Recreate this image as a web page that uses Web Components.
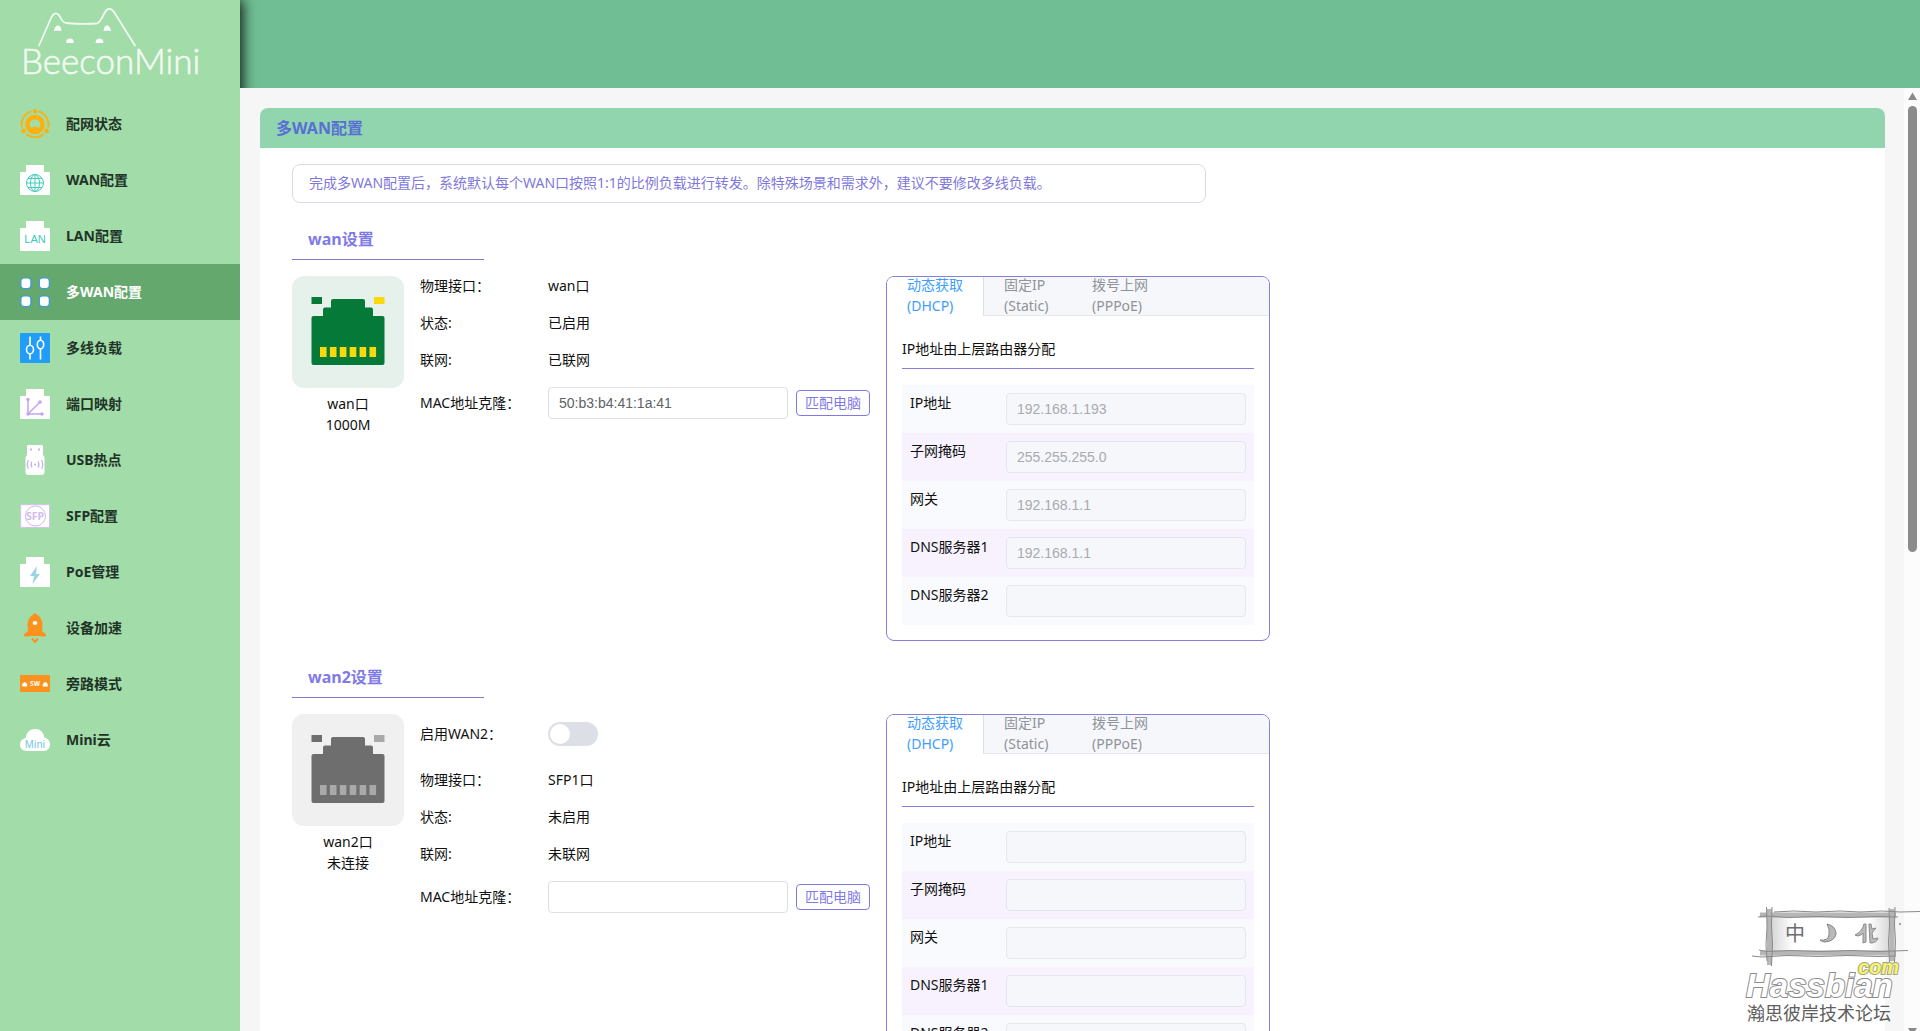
<!DOCTYPE html>
<html lang="zh-CN">
<head>
<meta charset="utf-8">
<title>BeeconMini</title>
<style>
  html, body { margin: 0; height: 100%; }
  body {
    font: 14px/21px "Noto Sans", "Noto Sans CJK SC", sans-serif;
    color: #111;
    overflow: hidden;
    background: #f6f6f6;
  }
</style>
</head>
<body>
<bee-app>
  <bee-sidebar slot="side">
    <bee-nav-item icon="status">配网状态</bee-nav-item>
    <bee-nav-item icon="wan">WAN配置</bee-nav-item>
    <bee-nav-item icon="lan">LAN配置</bee-nav-item>
    <bee-nav-item icon="multi" active>多WAN配置</bee-nav-item>
    <bee-nav-item icon="load">多线负载</bee-nav-item>
    <bee-nav-item icon="map">端口映射</bee-nav-item>
    <bee-nav-item icon="usb">USB热点</bee-nav-item>
    <bee-nav-item icon="sfp">SFP配置</bee-nav-item>
    <bee-nav-item icon="poe">PoE管理</bee-nav-item>
    <bee-nav-item icon="rocket">设备加速</bee-nav-item>
    <bee-nav-item icon="sw">旁路模式</bee-nav-item>
    <bee-nav-item icon="cloud">Mini云</bee-nav-item>
  </bee-sidebar>
  <bee-card>
    <span slot="title">多WAN配置</span>
    <bee-notice>完成多WAN配置后，系统默认每个WAN口按照1:1的比例负载进行转发。除特殊场景和需求外，建议不要修改多线负载。</bee-notice>
    <wan-section heading="wan设置">
      <port-tile slot="port" online name="wan口" state="1000M"></port-tile>
      <info-row label="物理接口：">wan口</info-row>
      <info-row label="状态:">已启用</info-row>
      <info-row label="联网:">已联网</info-row>
      <mac-row value="50:b3:b4:41:1a:41"></mac-row>
      <ip-panel slot="panel" values="192.168.1.193,255.255.255.0,192.168.1.1,192.168.1.1,"></ip-panel>
    </wan-section>
    <wan-section heading="wan2设置">
      <port-tile slot="port" name="wan2口" state="未连接"></port-tile>
      <switch-row label="启用WAN2："></switch-row>
      <info-row label="物理接口：">SFP1口</info-row>
      <info-row label="状态:">未启用</info-row>
      <info-row label="联网:">未联网</info-row>
      <mac-row value=""></mac-row>
      <ip-panel slot="panel" values=",,,,"></ip-panel>
    </wan-section>
  </bee-card>
  <site-mark slot="mark"></site-mark>
</bee-app>

<script>
const define = (name, render) => customElements.define(name, class extends HTMLElement {
  connectedCallback() {
    if (this.shadowRoot) return;
    const t = document.createElement('template');
    t.innerHTML = render(this);
    this.attachShadow({ mode: 'open' }).append(t.content.cloneNode(true));
  }
});

/* 30 x 30 menu icons */
const port = '<path fill="#fff" d="M6 0h18v7h6v23H0V7h6z"/>';
const ICONS = {
  status: '<g fill="none" stroke="#fdb10f"><path stroke-width="1.800" d="M18.500 2.300A13.500 13.500 0 0 1 28 18.500M11.500 2.300A13.500 13.500 0 0 0 2 18.500M6.500 25.300a13.500 13.500 0 0 0 17 0"/><circle cx="15" cy="15.500" r="7.500" stroke-width="4.500"/></g><g fill="#fdb10f"><circle cx="15" cy="2.200" r="2.200"/><circle cx="3.500" cy="22" r="2.400"/><circle cx="26.500" cy="22" r="2.400"/><path d="M10 18.500h3q2-2 4 0h3v3H10z"/></g>',
  wan: port + '<g fill="none" stroke="#41cdbb" stroke-width="1"><circle cx="15" cy="18" r="8.500"/><ellipse cx="15" cy="18" rx="4.500" ry="8.500"/><path d="M15 9.500v17M6.500 18h17M8 13.500h14M8 22.500h14"/></g>',
  lan: port + '<text x="15" y="21.500" font-size="11" fill="#3ccbb9" text-anchor="middle" font-family="Liberation Sans">LAN</text>',
  multi: '<g fill="#fff" stroke="#379bdc" stroke-width="1.200"><rect x=".9" y="1" width="10" height="10.500" rx="3"/><rect x="19.300" y="1" width="10" height="10.500" rx="3"/><rect x=".9" y="19" width="10" height="10.500" rx="3"/><rect x="19.300" y="19" width="10" height="10.500" rx="3"/></g>',
  load: '<rect width="30" height="30" rx="1" fill="#219df8"/><g fill="none" stroke="#fff" stroke-width="1.600"><path d="M10 3.500v9M10 21v5.500M20.500 3.500v4M20.500 16v10.500"/><ellipse cx="10" cy="16.500" rx="3.500" ry="4.300"/><ellipse cx="20.500" cy="11.600" rx="3.200" ry="4.300"/></g>',
  map: port + '<g fill="none" stroke="#c5a3f0" stroke-width="1.500"><path d="M8 10.500V25h14M8 25 20 13"/></g><g fill="#c5a3f0"><circle cx="8" cy="10.500" r="1.700"/><circle cx="20" cy="13" r="1.800"/><circle cx="22" cy="25" r="1.700"/><circle cx="8" cy="25" r="1.700"/></g>',
  usb: '<path fill="#fff" d="M7 1q0-1 1-1h14q1 0 1 1v9q1.500 1 1.500 3v14q0 3-3 3h-13q-3 0-3-3V13q0-2 1.500-3z"/><g fill="#cbb2f0"><rect x="10" y="3.500" width="2" height="2"/><rect x="18" y="3.500" width="2" height="2"/><circle cx="15" cy="19.500" r="1.100"/></g><g fill="none" stroke="#cbb2f0" stroke-width="1.300"><path d="M11.800 16.500q-1.400 3 0 6M18.200 16.500q1.400 3 0 6M8.500 15q-2.400 4.500 0 9M21.500 15q2.400 4.500 0 9"/></g>',
  sfp: '<rect x=".7" y="3.700" width="28.800" height="22.800" fill="#fff" stroke="#d6c0f5"/><circle cx="15.500" cy="15" r="10" fill="none" stroke="#d2b9f4"/><text x="15" y="19" font-size="10.500" font-weight="700" fill="#d2b9f4" text-anchor="middle" font-family="Noto Sans">SFP</text>',
  poe: port + '<path fill="#9bd5e4" d="M16.500 9.500 10 19h4l-1.500 8 7.500-10h-4l.800-7.500z"/>',
  rocket: '<path fill="#fc911e" d="M15 0c5 3 7.500 7 7.500 12l-.5 6 4 3.500v1.500q-3 1-6 0h-10q-3 1-6 0v-1.500L8 18l-.5-6C7.500 7 10 3 15 0z"/><ellipse cx="15" cy="10" rx="2.400" ry="1.900" fill="#fff"/><path d="M12 25.500 15 29l3-3.500" fill="none" stroke="#fc911e" stroke-width="2"/>',
  sw: '<rect y="6" width="30" height="17" rx="1" fill="#fb921d"/><g fill="#fff"><path d="M2.200 17.500v-2.500l1-1q1.500-2 3 0l1 1v2.500zM22.800 17.500v-2.500l1-1q1.500-2 3 0l1 1v2.500z"/><text x="15" y="17" font-size="6.500" font-weight="700" text-anchor="middle" font-family="Noto Sans">SW</text></g>',
  cloud: '<path fill="#fff" d="M6 26q-6-1-6-6.500 0-5 5.500-6.500Q7 4 15 4t9.500 8.500Q30 14 30 19.500T24 26z"/><text x="15" y="22.500" font-size="10" fill="#72c6da" text-anchor="middle" font-family="Noto Sans">Mini</text>'
};

define('bee-app', () => `
<style>
  :host { display: grid; grid-template: 88px minmax(0, 1fr) / 240px minmax(0, 1fr); height: 100vh; overflow: hidden; position: relative; }
  header { grid-area: 1 / 2; background: #70be94; }
  aside { grid-area: 1 / 1 / 3 / 2; z-index: 1; display: flex; box-shadow: 3px 0 12px rgba(0,0,0,.85); }
  main { grid-area: 2 / 2; z-index: 2; display: flex; background: #f6f6f6; min-height: 0; }
  .view { flex: 1; min-width: 0; overflow-y: auto; scrollbar-width: none; padding: 20px 19px 20px 20px; }
  .bar { flex: none; width: 16px; background: #fcfcfc; margin-bottom: -8px; display: flex; flex-direction: column; align-items: center; }
  .bar i { width: 9px; height: 446px; border-radius: 5px; background: #8b8b8b; }
  .bar svg { width: 9px; height: 18px; flex: none; }
  .bar svg:last-child { margin-top: auto; }
</style>
<header></header>
<aside><slot name="side"></slot></aside>
<main>
  <div class="view"><slot></slot></div>
  <div class="bar" aria-hidden="true">
    <svg viewBox="0 0 9 18"><path d="M4.500 4.500 9 12H0z" fill="#8b8b8b"/></svg>
    <i></i>
    <svg viewBox="0 0 9 18"><path d="M0 7h9l-4.500 7z" fill="#8b8b8b"/></svg>
  </div>
</main>
<slot name="mark"></slot>`);

define('bee-sidebar', () => `
<style>
  :host { display: block; flex: 1; background: #a2dca9; }
  .logo { display: block; height: 96px; }
  svg { display: block; width: 240px; height: 96px; }
  nav { display: flex; flex-direction: column; }
</style>
<a class="logo" href="#home" aria-label="BeeconMini">
  <svg viewBox="0 0 240 96">
    <g fill="none" stroke="#effaf0" stroke-width="1.800" stroke-linecap="round" stroke-linejoin="round">
      <path d="M39 45.500 51.500 17q4.500-7 8.500-.5Q62 22 66 23q16 1.500 31 .5 3-1 7.500-10.500 4.500-8 9.500-1L135 45.500"/>
    </g>
    <g fill="#fff"><path d="M54 31q1-5.500 4-5.500T61.500 31q-3.500-1-7.500 0zM103.500 31q.5-5.500 3.500-5.500t4 5.500q-4-1-7.500 0zM66 42.500q.5-4 4-4t4 4q-1.500 1-4 .2-2.500.8-4-.2zM95.500 42.500q.5-4 4-4t4 4q-1.500 1-4 .2-2.500.8-4-.2z"/></g>
    <text x="21" y="74" font-family="Lato" font-weight="300" font-size="35" fill="#f2fbf2" stroke="#f2fbf2" stroke-width=".6">BeeconMini</text>
  </svg>
</a>
<nav><slot></slot></nav>`);

define('bee-nav-item', el => `
<style>
  :host { display: block; font-weight: 700; color: #1f3327; }
  :host([active]) { background: #64a86d; color: #fff; }
  a { display: flex; align-items: center; gap: 16px; height: 56px; padding: 0 20px; color: inherit; text-decoration: none; }
  svg { width: 30px; height: 30px; flex: none; font-weight: 400; }
  span { padding-bottom: 2px; }
</style>
<a href="#${el.getAttribute('icon')}"><svg viewBox="0 0 30 30" aria-hidden="true">${ICONS[el.getAttribute('icon')]}</svg><span><slot></slot></span></a>`);

define('bee-card', () => `
<style>
  :host { display: block; background: #fff; border-radius: 8px; overflow: hidden; }
  h1 { margin: 0; padding: 0 16px; font-size: 16px; line-height: 40px; color: #586fd6; background: #91d5af; }
  .body { display: flex; flex-direction: column; gap: 16px; padding: 16px 32px; }
</style>
<h1><slot name="title"></slot></h1>
<div class="body"><slot></slot></div>`);

define('bee-notice', () => `
<style>
  :host { display: block; box-sizing: border-box; width: 100%; max-width: 914px; padding: 7px 16px 9px; border: 1px solid #d9dbe9; border-radius: 8px; color: #8078dc; }
</style><slot></slot>`);

define('wan-section', el => `
<style>
  :host { display: flex; flex-direction: column; gap: 16px; }
  h2 { margin: 0; box-sizing: border-box; width: 192px; padding: 0 16px; font-size: 16px; line-height: 40px; color: #7f7be6; border-bottom: 1px solid #857bcc; }
  .cols { display: flex; gap: 16px; align-items: flex-start; }
  .rows { display: flex; flex-direction: column; gap: 16px; width: 450px; }
</style>
<h2>${el.getAttribute('heading')}</h2>
<div class="cols"><slot name="port"></slot><div class="rows"><slot></slot></div><slot name="panel"></slot></div>`);

define('port-tile', el => {
  const on = el.hasAttribute('online');
  const c = on ? '#057a38' : '#6e6e6e', p = on ? '#fbd80c' : '#a9a9a9';
  const pins = [0, 1, 2, 3, 4, 5].map(i => `<rect x="${28 + i * 9.900}" y="71" width="6.600" height="10"/>`).join('');
  return `
<style>
  :host { display: flex; flex-direction: column; gap: 5px; width: 112px; flex: none; text-align: center; }
  .tile { height: 112px; border-radius: 12px; background: ${on ? '#e6f1ec' : '#f0f0f0'}; }
  svg { display: block; width: 112px; height: 112px; }
  p { margin: 0; }
</style>
<div class="tile"><svg viewBox="0 0 112 112" aria-hidden="true">
  <g fill="${c}"><rect x="19.500" y="21" width="10.500" height="7"/><path d="M39 25q0-2 2-2h30q2 0 2 2v6.500h6q2 0 2 2V40h9.500q2 0 2 2v45q0 2-2 2h-69q-2 0-2-2V42q0-2 2-2H31v-6.500q0-2 2-2h6z"/></g>
  <g fill="${p}"><rect x="82" y="21" width="10.500" height="7"/>${pins}</g>
</svg></div>
<p>${el.getAttribute('name')}<br>${el.getAttribute('state')}</p>`;
});

define('info-row', el => `
<style>:host { display: flex; line-height: 19px; padding-bottom: 2px; } span { width: 128px; flex: none; }</style>
<span>${el.getAttribute('label')}</span><div><slot></slot></div>`);

define('switch-row', el => `
<style>
  :host { display: flex; align-items: center; height: 40px; }
  label { width: 128px; flex: none; padding-bottom: 2px; }
  input { appearance: none; margin: 0; width: 50px; height: 24px; padding: 2px; box-sizing: border-box; border-radius: 12px; background: #dcdfe6; display: flex; }
  input::before { content: ""; width: 20px; height: 20px; border-radius: 50%; background: #fff; }
  input:checked { background: #7f7be6; justify-content: flex-end; }
</style>
<label for="sw">${el.getAttribute('label')}</label><input id="sw" type="checkbox" role="switch">`);

define('mac-row', el => `
<style>
  :host { display: flex; align-items: center; }
  label { width: 128px; flex: none; padding-bottom: 2px; }
  input { box-sizing: border-box; width: 240px; height: 32px; padding: 0 10px; margin-right: 8px; border: 1px solid #dcdfe6; border-radius: 4px; font: 14px "Liberation Sans", sans-serif; color: #606266; background: #fff; }
  button { box-sizing: border-box; height: 26px; padding: 0 8px; border: 1px solid #7f7be6; border-radius: 4px; background: #fff; color: #7f7be6; font: inherit; line-height: 24px; white-space: nowrap; }
</style>
<label for="mac">MAC地址克隆：</label><input id="mac" type="text" value="${el.getAttribute('value')}"><button type="button">匹配电脑</button>`);

define('ip-field', el => `
<style>
  :host { display: flex; padding: 8px; background: #f9fafe; }
  :host([alt]) { background: #f7f2fe; }
  label { width: 96px; flex: none; line-height: 19px; }
  input { box-sizing: border-box; flex: 1; min-width: 0; height: 32px; padding: 0 10px; border: 1px solid #e4e7ed; border-radius: 4px; background: #f5f7fa; font: 14px "Liberation Sans", sans-serif; color: #a8abb2; }
</style>
<label for="f">${el.getAttribute('label')}</label><input id="f" type="text" disabled value="${el.getAttribute('value')}">`);

define('ip-panel', el => {
  const v = el.getAttribute('values').split(',');
  const fields = ['IP地址', '子网掩码', '网关', 'DNS服务器1', 'DNS服务器2']
    .map((l, i) => `<ip-field label="${l}" value="${v[i]}" ${i % 2 ? 'alt' : ''}></ip-field>`).join('');
  return `
<style>
  :host { display: block; box-sizing: border-box; width: 384px; flex: none; border: 1px solid #8580dc; border-radius: 8px; overflow: hidden; }
  .tabs { display: flex; height: 38px; background: #f5f7fa; border-bottom: 1px solid #e4e7ed; }
  button { display: flex; align-items: center; box-sizing: border-box; min-width: 88px; height: 39px; padding: 0 20px 3px; border: 0; background: none; font: inherit; color: #909399; text-align: left; overflow: hidden; }
  button[aria-selected=true] { background: #fff; color: #409eff; border-right: 1px solid #dcdfe6; }
  .pane { padding: 15px; }
  h3 { margin: 0 0 16px; font-size: 14px; font-weight: 400; line-height: 35px; padding-bottom: 2px; border-bottom: 1px solid #8580dc; }
</style>
<div class="tabs" role="tablist">
  <button role="tab" aria-selected="true"><span>动态获取<br>(DHCP)</span></button>
  <button role="tab" aria-selected="false"><span>固定IP<br>(Static)</span></button>
  <button role="tab" aria-selected="false"><span>拨号上网<br>(PPPoE)</span></button>
</div>
<div class="pane"><h3>IP地址由上层路由器分配</h3>${fields}</div>`;
});

define('site-mark', () => `
<style>
  :host { position: absolute; right: 0; bottom: 0; z-index: 3; pointer-events: none; }
  svg { display: block; width: 180px; height: 131px; }
</style>
<svg viewBox="0 0 180 131">
  <defs><linearGradient id="g" x1="0" x2="1"><stop offset="0" stop-color="#d8d8d8"/><stop offset=".18" stop-color="#fff"/><stop offset=".82" stop-color="#fff"/><stop offset="1" stop-color="#d8d8d8"/></linearGradient></defs>
  <rect x="32" y="17" width="118" height="36" fill="url(#g)"/>
  <g fill="none" stroke="#b6b6b6" stroke-width="5"><path d="M20 15h136M20 53h136M29.500 9v56M152 9v52"/></g>
  <g fill="none" stroke="#8a8a8a" stroke-width="1">
    <path d="M34 12l20-1 22 1 24-1 20 1 22-1 18 1 20-.5M18 17l8-1 22 1.500 30-1 30 1 30-1 20 .5M19 50l8 1.500 24-1 30 1 30-1 28 1 29-1M12 56l10 1 26-1.500 30 1 30-1 30 1 18-.5"/>
    <path d="M26.500 7l.5 20-1 18 1 16M32 7l-.5 18 1 20-1 21M149 8l.5 18-1 16 1 20M155 7l-.5 18 1 16-1 22"/>
  </g>
  <circle cx="160" cy="24" r="1" fill="#888"/>
  <text x="45" y="41" font-size="20" fill="#6d6d6d" font-family="Noto Sans CJK SC">中</text>
  <path d="M87 24q9 2 9 10-1 7-11 8-3 0-5-2 8 1 9-5t-2-11z" fill="#b9b9b9" stroke="#858585"/>
  <path d="M124 24q-2 8-9 11l3 1q4-1 5-3v10l3-1V24zM129 24l1 19q7 0 8-5l-5 1-1-6 4-5-4 1-1-5z" fill="#bbb" stroke="#8b8b8b"/>
  <g font-family="Liberation Sans" font-weight="700" font-style="italic" paint-order="stroke">
    <text x="6" y="97" font-size="33" fill="#fff" stroke="#8b8b8b" stroke-width="2">Hassbian</text>
    <text x="118" y="74" font-size="20" fill="#f7f36a" stroke="#a4a486" stroke-width="2">com</text>
  </g>
  <text x="79" y="120" text-anchor="middle" font-size="18" fill="#5e5e5e" font-family="Noto Sans CJK SC">瀚思彼岸技术论坛</text>
</svg>`);
</script>
</body>
</html>
